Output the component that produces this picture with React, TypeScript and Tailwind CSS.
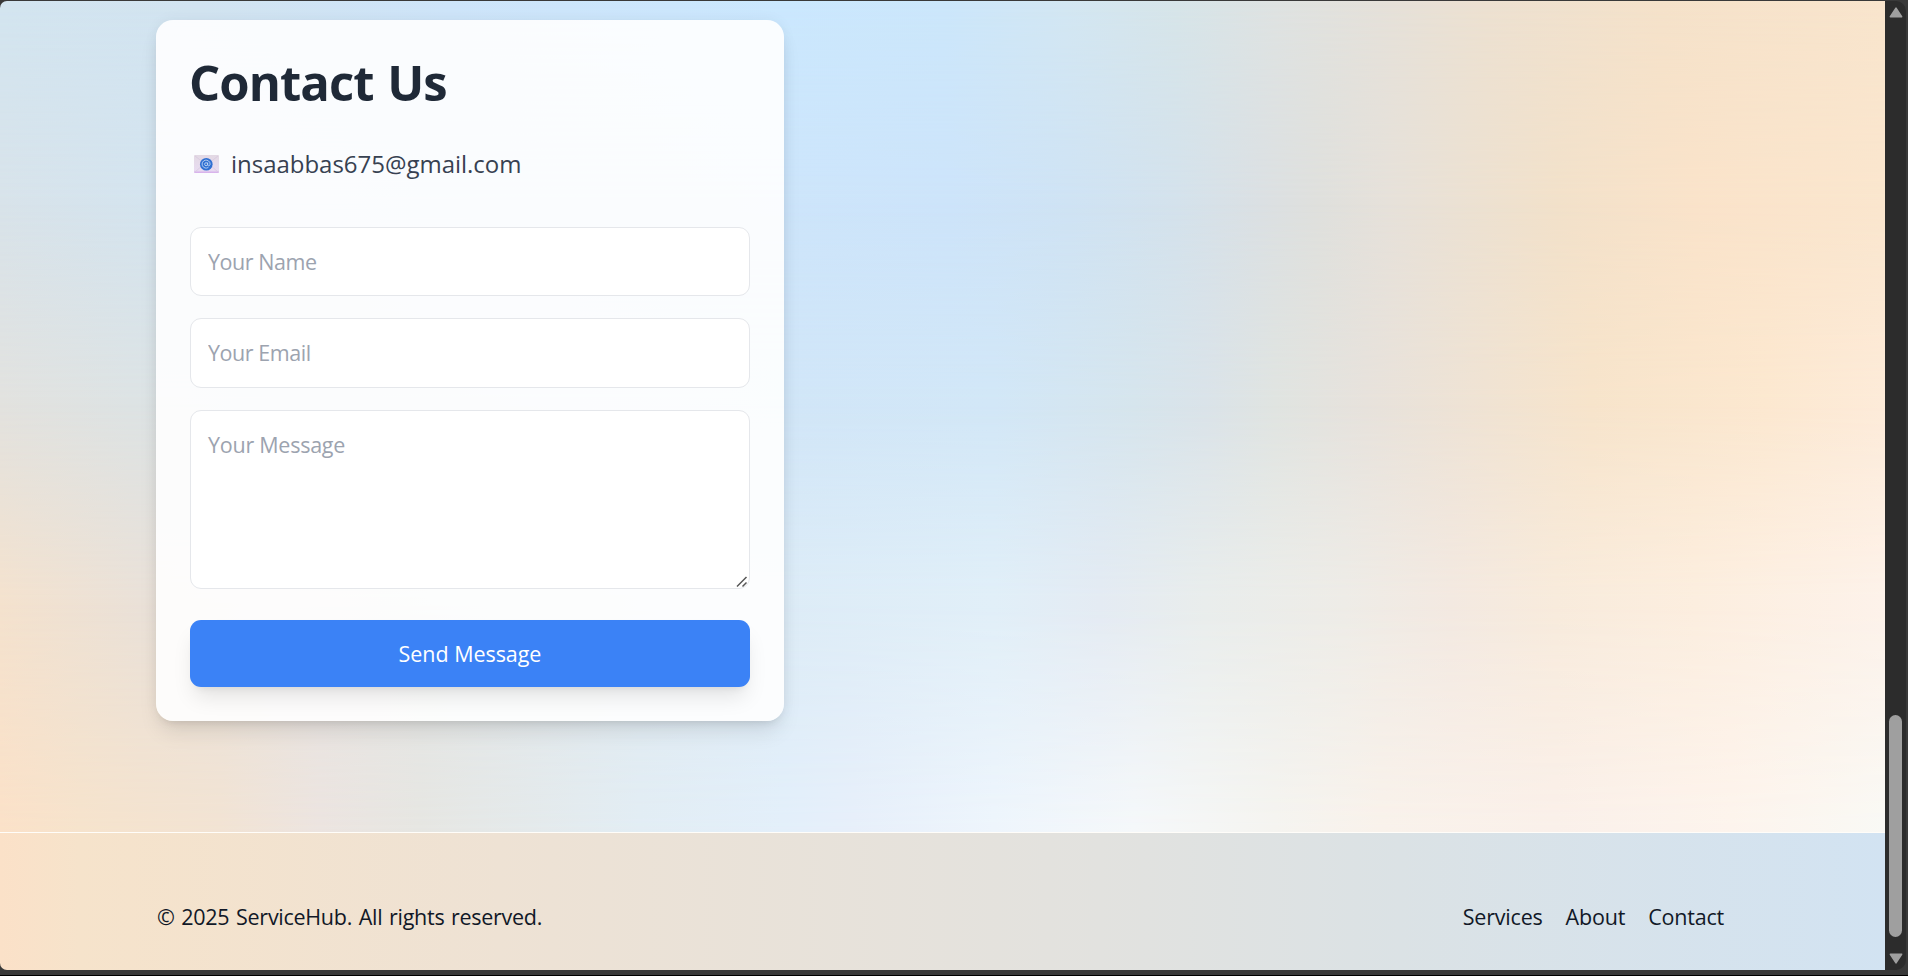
import React from "react";

const fieldClass =
  "block w-full rounded-[11px] border border-[#e5e7eb] bg-white px-[17px] text-[21.5px] text-gray-800 outline-none placeholder:text-[#9ca3af]";

function Backdrop() {
  return (
    <div className="absolute inset-0">
      <div className="absolute inset-0 bg-[linear-gradient(90deg,#d3e5f0_0px,#d2e4f1_200px,#cee5fa_450px,#cbe8fe_784px,#cce7fb_945px,#d3e7f3_1065px,#d7e5e9_1177px,#dfe3e2_1275px,#e5e1da_1380px,#ede1d1_1486px,#f5e2ca_1661px,#f9e5cd_1885px)]" />
      <div className="absolute inset-0 bg-[linear-gradient(90deg,#d8e3ea_0px,#d4e4ef_150px,#cde5fb_784px,#cde4fa_950px,#cfe3f4_1070px,#d4e2ec_1177px,#dbe0e3_1261px,#dfe0dd_1317px,#e6e1da_1387px,#f2e1ca_1556px,#fae3ca_1696px,#fae6ce_1885px)] [mask-image:linear-gradient(180deg,transparent_0px,black_200px)]" />
      <div className="absolute inset-0 bg-[linear-gradient(90deg,#e2e2df_0px,#dde3e4_130px,#d1e6f8_784px,#d2e7f7_994px,#d6e5ed_1135px,#dae3e9_1205px,#e0e4e1_1275px,#e7e2dc_1366px,#f0e3d3_1486px,#f7e4cb_1591px,#fce8d0_1766px,#fdebd9_1885px)] [mask-image:linear-gradient(180deg,transparent_200px,black_400px)]" />
      <div className="absolute inset-0 bg-[linear-gradient(90deg,#f4e2ce_0px,#eae1d8_140px,#ddecf7_784px,#e1eff8_994px,#e4ebf3_1100px,#e9edec_1205px,#eeece7_1345px,#f3e9e1_1451px,#f8ebdc_1556px,#fceedf_1696px,#fdf2ea_1885px)] [mask-image:linear-gradient(180deg,transparent_400px,black_600px)]" />
      <div className="absolute inset-0 bg-[linear-gradient(90deg,#fbe1c8_0px,#f6e3cc_80px,#f2e3d3_220px,#ece4e0_320px,#e6e6e2_420px,#e2edf4_640px,#e3effa_784px,#e7effa_854px,#eef5fc_994px,#f5f8fa_1135px,#f5f4f0_1275px,#f9f2eb_1380px,#faf0ea_1556px,#fdf4ed_1731px,#f9f9f5_1885px)] [mask-image:linear-gradient(180deg,transparent_600px,black_832px)]" />
    </div>
  );
}

function MailIcon() {
  return (
    <svg width="25" height="18" viewBox="0 0 25 18" className="shrink-0">
      <defs>
        <linearGradient id="paper" x1="0" y1="0" x2="0" y2="1">
          <stop offset="0" stopColor="#e3d9e4" />
          <stop offset="0.85" stopColor="#e8dcf1" />
          <stop offset="1" stopColor="#d5aaeb" />
        </linearGradient>
      </defs>
      <rect width="25" height="18" rx="1" fill="url(#paper)" />
      <path d="M1 1 12.5 10 24 1M1 17l8-7M24 17l-8-7" fill="none" stroke="#d5c7dd" strokeWidth="0.7" />
      <circle cx="12.3" cy="9.2" r="6.3" fill="#3070d2" />
      <circle cx="12.1" cy="9.2" r="1.5" fill="none" stroke="#cfe0f7" strokeWidth="0.8" />
      <path d="M13.7 7.4v2.4c0 1.6 2.4 1.4 2.4-.8a4 4 0 1 0-1.7 3.4" fill="none" stroke="#cfe0f7" strokeWidth="0.8" />
    </svg>
  );
}

function ContactCard() {
  return (
    <section className="relative ml-[156px] mt-[19px] h-[701px] w-[628px] rounded-[17px] bg-white/90 px-[34px] pt-[32px] shadow-[0_14px_21px_-4px_rgba(0,0,0,0.1),0_6px_8px_-6px_rgba(0,0,0,0.1),0_0_14px_rgba(0,0,0,0.05)]">
      <h1 className="-ml-px h-[62px] whitespace-nowrap text-[49px] font-bold leading-[60px] tracking-[-0.95px] text-[#1f2937] [word-spacing:2px]">
        Contact Us
      </h1>
      <div className="mt-[30px] flex h-[40px] items-center gap-[12px] pl-[4px]">
        <MailIcon />
        <span className="whitespace-nowrap text-[24px] leading-[40px] tracking-[-0.02px] text-[#374151]">
          insaabbas675@gmail.com
        </span>
      </div>
      <form className="mt-[43px]" onSubmit={(e) => e.preventDefault()}>
        <input className={`${fieldClass} h-[69px] tracking-[-0.45px]`} placeholder="Your Name" />
        <input className={`${fieldClass} mt-[22px] h-[70px] pb-[2px] tracking-[-0.45px]`} placeholder="Your Email" />
        <div className="relative mt-[22px]">
          <textarea
            className={`${fieldClass} h-[179px] resize-none pt-[17px] leading-[34px] tracking-[-0.25px]`}
            placeholder="Your Message"
          />
          <svg className="absolute bottom-[1px] right-[2px]" width="12" height="12" viewBox="0 0 12 12">
            <path d="M1 10.5 10.5 1M6.5 10.5l4-4" stroke="#555" strokeWidth="1.5" fill="none" />
          </svg>
        </div>
        <button className="mt-[31px] flex h-[67px] w-full items-center justify-center rounded-[11px] bg-[#3b82f6] pt-[2px] text-[21.5px] tracking-[-0.05px] text-white shadow-[0_14px_21px_-4px_rgba(0,0,0,0.1),0_6px_8px_-6px_rgba(0,0,0,0.1)]">
          Send Message
        </button>
      </form>
    </section>
  );
}

function Footer() {
  return (
    <footer className="flex h-[137px] items-center justify-between bg-[linear-gradient(90deg,#fbe1c8_0px,#f6e3cb_80px,#eee2d4_500px,#e2e2df_1100px,#dbe2e5_1400px,#d2e3f2_1885px)] pl-[157px] pr-[161px] pt-[31px] text-[21.5px] text-[#111827]">
      <p className="whitespace-nowrap tracking-[-0.28px] [word-spacing:1.4px]">© 2025 ServiceHub. All rights reserved.</p>
      <nav className="flex gap-[23px] tracking-[-0.2px]">
        <a>Services</a>
        <a>About</a>
        <a>Contact</a>
      </nav>
    </footer>
  );
}

function Scrollbar() {
  return (
    <div className="flex h-[969px] w-[21px] flex-col items-center rounded-r-[10px] bg-[#2c2c2c]">
      <svg className="mt-[6px]" width="14" height="11" viewBox="0 0 14 11">
        <path d="M7 1.2 12.6 9.8H1.4Z" fill="#9f9f9f" stroke="#9f9f9f" strokeWidth="1.6" strokeLinejoin="round" />
      </svg>
      <div className="mt-[697px] h-[222px] w-[13px] rounded-full bg-[#9f9f9f]" />
      <svg className="mt-[16px]" width="14" height="11" viewBox="0 0 14 11">
        <path d="M7 9.8 12.6 1.2H1.4Z" fill="#9f9f9f" stroke="#9f9f9f" strokeWidth="1.6" strokeLinejoin="round" />
      </svg>
    </div>
  );
}

export default function App() {
  return (
    <div className="h-[976px] w-[1908px] overflow-hidden border-b border-black bg-[#393939] pt-px font-['Open_Sans','Noto_Sans',sans-serif]">
      <div className="flex h-[969px]">
        <main className="w-[1885px] overflow-hidden rounded-l-[7px]">
          <div className="relative flow-root h-[832px] border-b border-[#fffdf9]">
            <Backdrop />
            <ContactCard />
          </div>
          <Footer />
        </main>
        <Scrollbar />
      </div>
    </div>
  );
}
